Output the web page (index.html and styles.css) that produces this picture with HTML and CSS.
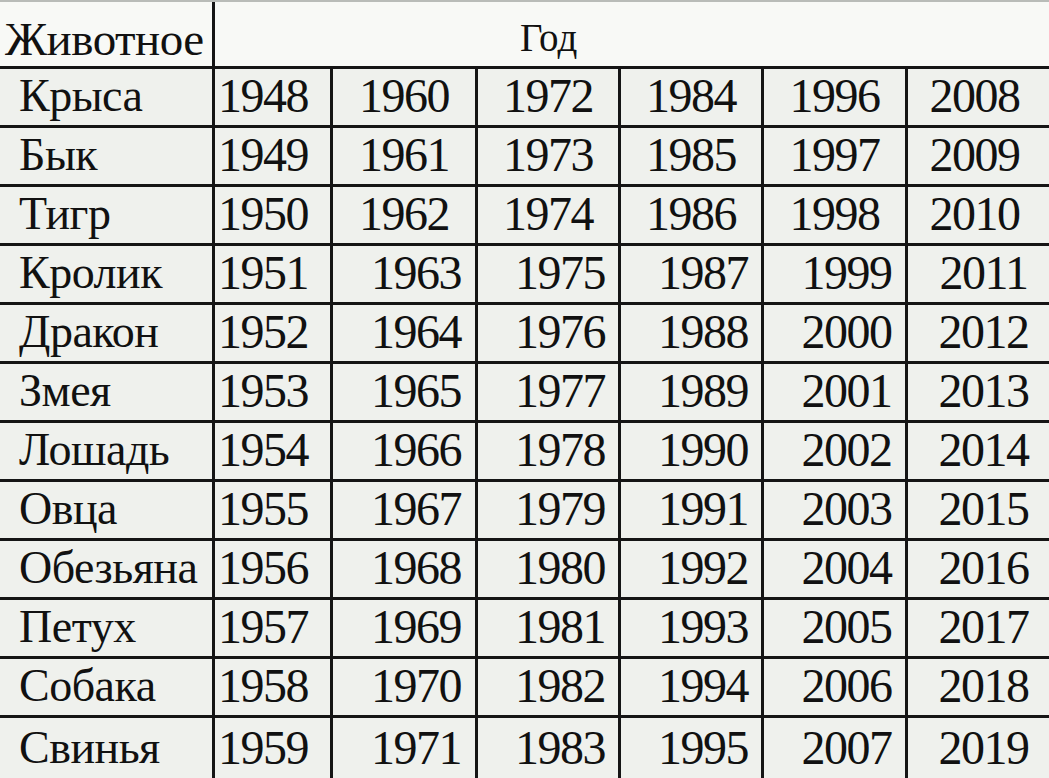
FILE: index.html
```html
<!DOCTYPE html>
<html lang="ru">
<head>
<meta charset="utf-8">
<title>Животное / Год</title>
<link rel="stylesheet" href="styles.css">
</head>
<body>
<div class="sheet">
  <div class="cell head animal-head"><span class="t">Животное</span></div>
  <div class="cell head year-head"><span class="t">Год</span></div>

  <div class="cell name"><span class="t">Крыса</span></div>
  <div class="cell y first"><span class="t">1948</span></div>
  <div class="cell y"><span class="t">1960</span></div>
  <div class="cell y"><span class="t">1972</span></div>
  <div class="cell y"><span class="t">1984</span></div>
  <div class="cell y"><span class="t">1996</span></div>
  <div class="cell y last"><span class="t">2008</span></div>

  <div class="cell name"><span class="t">Бык</span></div>
  <div class="cell y first"><span class="t">1949</span></div>
  <div class="cell y"><span class="t">1961</span></div>
  <div class="cell y"><span class="t">1973</span></div>
  <div class="cell y"><span class="t">1985</span></div>
  <div class="cell y"><span class="t">1997</span></div>
  <div class="cell y last"><span class="t">2009</span></div>

  <div class="cell name"><span class="t">Тигр</span></div>
  <div class="cell y first"><span class="t">1950</span></div>
  <div class="cell y"><span class="t">1962</span></div>
  <div class="cell y"><span class="t">1974</span></div>
  <div class="cell y"><span class="t">1986</span></div>
  <div class="cell y"><span class="t">1998</span></div>
  <div class="cell y last"><span class="t">2010</span></div>

  <div class="cell name"><span class="t">Кролик</span></div>
  <div class="cell y first"><span class="t">1951</span></div>
  <div class="cell y s"><span class="t">1963</span></div>
  <div class="cell y s"><span class="t">1975</span></div>
  <div class="cell y s"><span class="t">1987</span></div>
  <div class="cell y s"><span class="t">1999</span></div>
  <div class="cell y s last"><span class="t">2011</span></div>

  <div class="cell name"><span class="t">Дракон</span></div>
  <div class="cell y first"><span class="t">1952</span></div>
  <div class="cell y s"><span class="t">1964</span></div>
  <div class="cell y s"><span class="t">1976</span></div>
  <div class="cell y s"><span class="t">1988</span></div>
  <div class="cell y s"><span class="t">2000</span></div>
  <div class="cell y s last"><span class="t">2012</span></div>

  <div class="cell name"><span class="t">Змея</span></div>
  <div class="cell y first"><span class="t">1953</span></div>
  <div class="cell y s"><span class="t">1965</span></div>
  <div class="cell y s"><span class="t">1977</span></div>
  <div class="cell y s"><span class="t">1989</span></div>
  <div class="cell y s"><span class="t">2001</span></div>
  <div class="cell y s last"><span class="t">2013</span></div>

  <div class="cell name"><span class="t">Лошадь</span></div>
  <div class="cell y first"><span class="t">1954</span></div>
  <div class="cell y s"><span class="t">1966</span></div>
  <div class="cell y s"><span class="t">1978</span></div>
  <div class="cell y s"><span class="t">1990</span></div>
  <div class="cell y s"><span class="t">2002</span></div>
  <div class="cell y s last"><span class="t">2014</span></div>

  <div class="cell name"><span class="t">Овца</span></div>
  <div class="cell y first"><span class="t">1955</span></div>
  <div class="cell y s"><span class="t">1967</span></div>
  <div class="cell y s"><span class="t">1979</span></div>
  <div class="cell y s"><span class="t">1991</span></div>
  <div class="cell y s"><span class="t">2003</span></div>
  <div class="cell y s last"><span class="t">2015</span></div>

  <div class="cell name"><span class="t">Обезьяна</span></div>
  <div class="cell y first"><span class="t">1956</span></div>
  <div class="cell y s"><span class="t">1968</span></div>
  <div class="cell y s"><span class="t">1980</span></div>
  <div class="cell y s"><span class="t">1992</span></div>
  <div class="cell y s"><span class="t">2004</span></div>
  <div class="cell y s last"><span class="t">2016</span></div>

  <div class="cell name"><span class="t">Петух</span></div>
  <div class="cell y first"><span class="t">1957</span></div>
  <div class="cell y s"><span class="t">1969</span></div>
  <div class="cell y s"><span class="t">1981</span></div>
  <div class="cell y s"><span class="t">1993</span></div>
  <div class="cell y s"><span class="t">2005</span></div>
  <div class="cell y s last"><span class="t">2017</span></div>

  <div class="cell name"><span class="t">Собака</span></div>
  <div class="cell y first"><span class="t">1958</span></div>
  <div class="cell y s"><span class="t">1970</span></div>
  <div class="cell y s"><span class="t">1982</span></div>
  <div class="cell y s"><span class="t">1994</span></div>
  <div class="cell y s"><span class="t">2006</span></div>
  <div class="cell y s last"><span class="t">2018</span></div>

  <div class="cell name lastrow"><span class="t">Свинья</span></div>
  <div class="cell y first lastrow"><span class="t">1959</span></div>
  <div class="cell y s lastrow"><span class="t">1971</span></div>
  <div class="cell y s lastrow"><span class="t">1983</span></div>
  <div class="cell y s lastrow"><span class="t">1995</span></div>
  <div class="cell y s lastrow"><span class="t">2007</span></div>
  <div class="cell y s last lastrow"><span class="t">2019</span></div>
</div>
</body>
</html>
```

FILE: styles.css
```css
body {
  margin: 0;
  background: #eef0ec;
}

.sheet {
  width: 1049px;
  height: 778px;
  display: grid;
  grid-template-columns: 215px 118px 145px 143px 143px 144px 141px;
  grid-template-rows: 67px repeat(11, 59px) 62px;
  border-top: 2px solid #b9bcb8;
  box-sizing: border-box;
  overflow: hidden;
}

.cell {
  box-sizing: border-box;
  border-right: 3px solid #151515;
  border-bottom: 3px solid #151515;
  display: flex;
  align-items: center;
  justify-content: center;
  background: #eff1ed;
  overflow: hidden;
}

.t {
  font-family: "Liberation Serif", "Times New Roman", serif;
  font-size: 46px;
  color: #111;
  white-space: nowrap;
}

.head {
  background: #f8f9f6;
  align-items: flex-end;
}

.animal-head {
  justify-content: flex-start;
  padding-left: 5px;
  padding-bottom: 0;
}

.animal-head .t {
  font-size: 47px;
  letter-spacing: -0.5px;
}

.year-head {
  grid-column: 2 / span 6;
  justify-content: flex-start;
  padding-left: 305px;
  padding-bottom: 6px;
  border-right: none;
}

.year-head .t {
  font-size: 39px;
}

.name {
  justify-content: flex-start;
  padding-left: 19px;
  padding-bottom: 4px;
}

.name .t {
  font-size: 46px;
  letter-spacing: -0.5px;
}

.y {
  padding-bottom: 4px;
}

.y .t {
  font-size: 48px;
  letter-spacing: -1.5px;
}

.first {
  justify-content: flex-start;
  padding-left: 3px;
}

.s {
  padding-left: 24px;
}

.s.last {
  padding-left: 18px;
}

.last {
  border-right: none;
  padding-right: 8px;
}

.lastrow {
  border-bottom: none;
}
```
